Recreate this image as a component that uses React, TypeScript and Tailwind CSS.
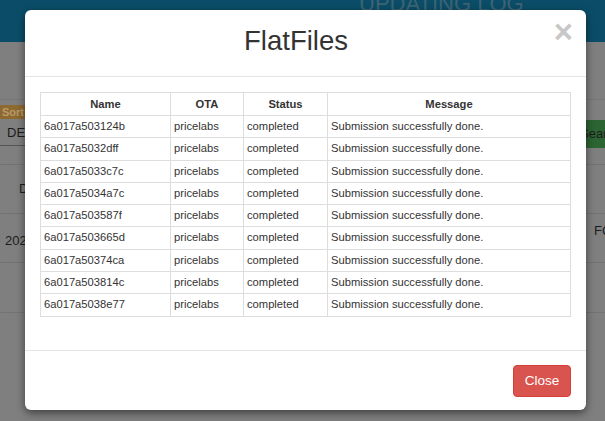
import React from 'react';

const ROWS = [
  '6a017a503124b',
  '6a017a5032dff',
  '6a017a5033c7c',
  '6a017a5034a7c',
  '6a017a503587f',
  '6a017a503665d',
  '6a017a50374ca',
  '6a017a503814c',
  '6a017a5038e77',
];

function PageBehind() {
  // the dimmed page under the modal backdrop
  return (
    <div className="h-[421px] w-[605px] overflow-hidden bg-[#7f7f7f] text-[#1c1c1c]">
      <div className="h-[42px] overflow-hidden bg-[#0b4d68] pl-[359px]">
        <div className="-mt-[9px] whitespace-nowrap text-[22px] leading-[26px] text-[#3d6474]">UPDATING LOG</div>
      </div>
      <div className="h-[58px] border-b border-[#767676]" />
      <div className="flex items-start justify-between">
        <div className="w-[60px]">
          <div className="mt-[5px] w-[26px] bg-[#8e6a30] px-[2px] text-[11px] font-bold leading-[14px] text-[#b89a6c]">Sort</div>
          <div className="h-[27px] border-b border-[#555] pl-[7px] text-[13px] leading-[27px]">DESC</div>
        </div>
        <div className="mt-[20px] h-[28px] w-[19px] overflow-hidden whitespace-nowrap bg-[#2d6433] text-[13px] leading-[28px] text-[#1c1c1c]">
          <span className="-ml-[6px]">Search</span>
        </div>
      </div>
      <div className="mt-[16px] flex h-[50px] items-center border-y border-[#737373] text-[13px]">
        <span className="pl-[19px]">D</span>
      </div>
      <div className="flex h-[49px] items-start justify-between border-b border-[#737373] text-[13px]">
        <span className="pl-[5px] pt-[17px]">2026</span>
        <span className="w-[11px] overflow-hidden whitespace-nowrap pt-[7px]">FC</span>
      </div>
      <div className="h-[50px] border-b border-[#737373]" />
    </div>
  );
}

export default function App() {
  return (
    <div className="relative h-[421px] w-[605px] overflow-hidden font-['Liberation_Sans',Arial,sans-serif]">
      <PageBehind />
      <div className="absolute inset-0 pt-[10px] pl-[25px]">
        <div className="w-[561px] overflow-hidden rounded-[6px] bg-white shadow-[0_3px_9px_rgba(0,0,0,0.5)]">
          <div className="relative flex h-[67px] items-center justify-center border-b border-[#e5e5e5] pr-[19px]">
            <h3 className="-mt-[4px] text-[27.5px] leading-[32px] text-[#333]">FlatFiles</h3>
            <span className="absolute top-[4px] right-[13px] text-[33px] font-bold leading-[36px] text-[#c8c8c8]">×</span>
          </div>
          <div className="px-[15px] pt-[15px] pb-[33px]">
            <table className="w-[531px] border-collapse text-[11.2px] text-[#333]">
              <thead>
                <tr>
                  <th className="w-[130px] border border-[#ddd] py-[2px] text-center font-bold leading-[18px]">Name</th>
                  <th className="w-[73px] border border-[#ddd] py-[2px] text-center font-bold leading-[18px]">OTA</th>
                  <th className="w-[84px] border border-[#ddd] py-[2px] text-center font-bold leading-[18px]">Status</th>
                  <th className="border border-[#ddd] py-[2px] text-center font-bold leading-[18px]">Message</th>
                </tr>
              </thead>
              <tbody>
                {ROWS.map((name) => (
                  <tr key={name}>
                    <td className="border border-[#ddd] px-[3px] py-[2px] leading-[17.3px]">{name}</td>
                    <td className="border border-[#ddd] px-[3px] py-[2px] leading-[17.3px]">pricelabs</td>
                    <td className="border border-[#ddd] px-[3px] py-[2px] leading-[17.3px]">completed</td>
                    <td className="border border-[#ddd] px-[3px] py-[2px] leading-[17.3px]">Submission successfully done.</td>
                  </tr>
                ))}
              </tbody>
            </table>
          </div>
          <div className="flex justify-end border-t border-[#e5e5e5] px-[15px] pt-[14px] pb-[13px]">
            <button type="button" className="h-[32px] w-[58px] rounded-[4px] border border-[#d43f3a] bg-[#d9534f] text-[13.5px] text-white">
              Close
            </button>
          </div>
        </div>
      </div>
    </div>
  );
}
